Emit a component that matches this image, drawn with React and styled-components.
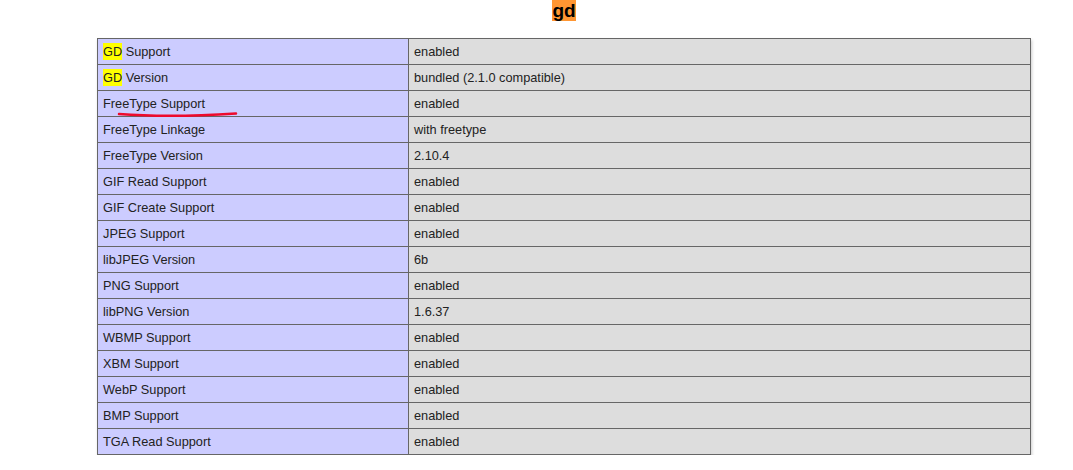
import styled, { createGlobalStyle } from "styled-components";

const GlobalStyle = createGlobalStyle`
  body {
    margin: 0;
    background: #fff;
    color: #222;
    font-family: "Liberation Sans", Arial, sans-serif;
  }
`;

const Page = styled.div`
  width: 934px;
  padding-left: 97px;
`;

const Heading = styled.h2`
  margin: 0;
  text-align: center;
  font-size: 19px;
  line-height: 21px;
  font-weight: bold;
  color: #000;
`;

const ActiveMatch = styled.span`
  background: #ff9632;
`;

const Match = styled.span`
  background: #ffff00;
  padding: 1px 0;
`;

const TableWrap = styled.div`
  position: relative;
  margin-top: 17px;
`;

const Table = styled.table`
  border-collapse: collapse;
  width: 934px;
  box-shadow: 1px 2px 3px #ccc;
`;

const Cell = styled.td`
  border: 1px solid #666;
  font-size: 12.75px;
  line-height: 17px;
  padding: 4px 5px;
  vertical-align: middle;
  color: #222;
  background: ${(p) => (p.$label ? "#ccccff" : "#dddddd")};
  width: ${(p) => (p.$label ? "300px" : "auto")};
`;

const Scribble = styled.svg`
  position: absolute;
  left: 20px;
  top: 72px;
  pointer-events: none;
`;

const rows = [
  [<><Match>GD</Match> Support</>, "enabled"],
  [<><Match>GD</Match> Version</>, "bundled (2.1.0 compatible)"],
  ["FreeType Support", "enabled"],
  ["FreeType Linkage", "with freetype"],
  ["FreeType Version", "2.10.4"],
  ["GIF Read Support", "enabled"],
  ["GIF Create Support", "enabled"],
  ["JPEG Support", "enabled"],
  ["libJPEG Version", "6b"],
  ["PNG Support", "enabled"],
  ["libPNG Version", "1.6.37"],
  ["WBMP Support", "enabled"],
  ["XBM Support", "enabled"],
  ["WebP Support", "enabled"],
  ["BMP Support", "enabled"],
  ["TGA Read Support", "enabled"],
];

export default function App() {
  return (
    <>
      <GlobalStyle />
      <Page>
        <Heading>
          <ActiveMatch>gd</ActiveMatch>
        </Heading>
        <TableWrap>
          <Table>
            <tbody>
              {rows.map(([k, v], i) => (
                <tr key={i}>
                  <Cell $label>{k}</Cell>
                  <Cell>{v}</Cell>
                </tr>
              ))}
            </tbody>
          </Table>
          <Scribble width="122" height="10" viewBox="0 0 122 10">
            <path
              d="M2 4 C 35 6.5, 80 6, 119 3.5"
              fill="none"
              stroke="#ee0a2c"
              strokeWidth="2.5"
              strokeLinecap="round"
            />
          </Scribble>
        </TableWrap>
      </Page>
    </>
  );
}
